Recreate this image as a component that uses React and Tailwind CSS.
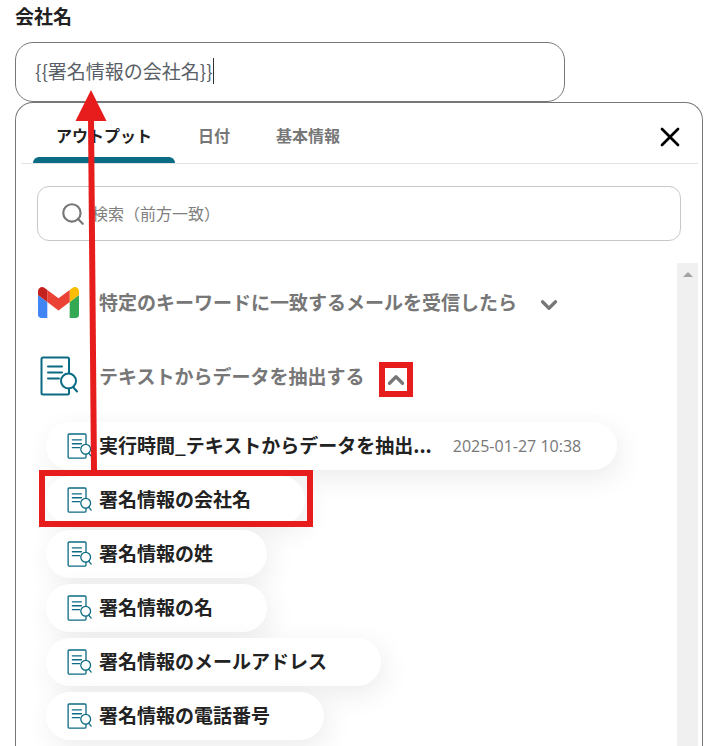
import React, { useState } from 'react';
import { ChevronDown, ChevronUp, Search, X } from 'lucide-react';

const TABS = ['アウトプット', '日付', '基本情報'];

const OUTPUTS = [
    { label: '実行時間_テキストからデータを抽出...', date: '2025-01-27 10:38' },
    { label: '署名情報の会社名', marked: true },
    { label: '署名情報の姓' },
    { label: '署名情報の名' },
    { label: '署名情報のメールアドレス' },
    { label: '署名情報の電話番号' },
];

function GmailIcon() {
    return (
        <svg viewBox="52 42 88 66" className="w-[41px] h-[31px] shrink-0" aria-hidden="true">
            <path fill="#4285f4" d="M58 108h14V74L52 59v43c0 3.32 2.69 6 6 6" />
            <path fill="#34a853" d="M120 108h14c3.32 0 6-2.69 6-6V59l-20 15" />
            <path fill="#fbbc04" d="M120 48v26l20-15v-8c0-7.42-8.47-11.65-14.4-7.2" />
            <path fill="#ea4335" d="M72 74V48l24 18 24-18v26L96 92" />
            <path fill="#c5221f" d="M52 51v8l20 15V48l-5.6-4.2c-5.94-4.45-14.4-.22-14.4 7.2" />
        </svg>
    );
}

function ExtractIcon({ className }) {
    return (
        <svg viewBox="0 0 38 40" className={className} fill="none" stroke="#0b6b83" strokeWidth={2} strokeLinecap="round" aria-hidden="true">
            <path d="M29 17V3a1.500 1.500 0 0 0-1.500-1.500H3A1.500 1.500 0 0 0 1.500 3v34A1.500 1.500 0 0 0 3 38.500h24.500A1.500 1.500 0 0 0 29 37v-4.500" />
            <path d="M8 10.500h14M8 16.500h14M8 22.500h11" />
            <circle cx="28.500" cy="25" r="7.500" />
            <path d="M33 31l4 4.500" />
        </svg>
    );
}

function OutputPill({ item }) {
    return (
        <li className="relative">
            <button
                type="button"
                className={`h-12 pl-[21px] flex items-center gap-[7px] rounded-full bg-white shadow-[4px_8px_28px_rgba(0,0,0,0.08)] whitespace-nowrap ${item.date ? 'pr-9' : 'pr-[54px]'}`}
            >
                <ExtractIcon className="w-[25px] h-[26px] shrink-0" />
                <span className="pb-[2px] text-[19px] leading-7 font-bold text-[#222222]">{item.label}</span>
                {item.date && (
                    <span className="ml-[14px] text-base text-[#777777] font-['Open_Sans','Noto_Sans_CJK_JP',sans-serif]">{item.date}</span>
                )}
            </button>
            {item.marked && <div className="absolute -left-[7px] -top-[6px] w-[274px] h-[57px] border-[6px] border-[#e71c1c]" />}
        </li>
    );
}

export default function App() {
    const [value, setValue] = useState('{{署名情報の会社名}}');
    const [tab, setTab] = useState(TABS[0]);
    const [query, setQuery] = useState('');

    return (
        <div className="relative h-screen overflow-hidden flex flex-col bg-white pl-[15px] pr-[19px] pt-[2px] font-['Noto_Sans_CJK_JP',sans-serif]">
            <label htmlFor="company" className="mb-3 text-[19px] leading-7 font-bold text-[#222222]">会社名</label>
            <div className="relative w-4/5">
                <input
                    id="company"
                    type="text"
                    value={value}
                    onChange={(e) => setValue(e.target.value)}
                    className="w-full h-[60px] px-[19px] pb-1 border border-[#777777] rounded-[18px] text-[19px] text-[#5a5f67] outline-none"
                />
                <span className="absolute left-[198px] top-4 w-px h-[26px] bg-[#333333]" />
            </div>

            <section className="flex-1 min-h-0 flex flex-col border border-b-0 border-[#777777] rounded-t-[18px]">
                <header className="ml-[5px] mr-1 pl-3 pr-3 h-[61px] shrink-0 flex items-stretch justify-between border-b border-[#e2e2e2]">
                    <div role="tablist" className="flex">
                        {TABS.map((name) => (
                            <button
                                key={name}
                                type="button"
                                role="tab"
                                aria-selected={tab === name}
                                onClick={() => setTab(name)}
                                className={`flex flex-col justify-between text-base leading-6 font-bold pt-5 ${tab === name ? 'text-[#222222]' : 'text-[#777777]'}`}
                            >
                                <span className="px-[23px]">{name}</span>
                                {tab === name && <span className="w-full h-[6px] rounded-t-md bg-[#0b6b83]" />}
                            </button>
                        ))}
                    </div>
                    <button type="button" aria-label="閉じる" className="pt-2 text-black">
                        <X size={32} strokeWidth={2} />
                    </button>
                </header>

                <div className="mx-[21px] mt-[22px] h-[55px] shrink-0 pl-[22px] flex items-center gap-[6px] border border-[#c8c8c8] rounded-xl">
                    <Search size={26} strokeWidth={2} className="text-[#777777] shrink-0" />
                    <input
                        type="text"
                        aria-label="検索"
                        placeholder="検索（前方一致）"
                        value={query}
                        onChange={(e) => setQuery(e.target.value)}
                        className="flex-1 h-full pb-px text-base text-[#222222] placeholder:text-[#808080] outline-none"
                    />
                </div>

                <div className="mt-[22px] mr-1 flex-1 min-h-0 flex">
                    <div className="flex-1 min-w-0 flex flex-col pt-[2px] overflow-hidden">
                        <button type="button" className="h-[74px] shrink-0 pl-[22px] flex items-center text-[#777777]">
                            <GmailIcon />
                            <span className="ml-5 text-[19px] leading-7 font-bold">特定のキーワードに一致するメールを受信したら</span>
                            <ChevronDown size={26} strokeWidth={3} className="ml-[19px] mt-[6px]" />
                        </button>
                        <button type="button" className="h-[74px] shrink-0 pl-6 flex items-center text-[#777777]">
                            <ExtractIcon className="w-[38px] h-10 shrink-0" />
                            <span className="ml-[21px] text-[19px] leading-7 font-bold">テキストからデータを抽出する</span>
                            <span className="ml-[15px] mt-[7px] w-[34px] h-[35px] flex items-center justify-center border-[6px] border-[#e71c1c]">
                                <ChevronUp size={26} strokeWidth={3} className="shrink-0" />
                            </span>
                        </button>
                        <ul className="flex-1 min-h-0 overflow-hidden pl-[30px] pt-[9px] flex flex-col items-start gap-[6px]">
                            {OUTPUTS.map((item) => (
                                <OutputPill key={item.label} item={item} />
                            ))}
                        </ul>
                    </div>
                    <div className="w-[21px] shrink-0 bg-[#f0f0f0] flex justify-center pt-[9px]">
                        <svg viewBox="0 0 10 5" className="w-[10px] h-[5px]" aria-hidden="true">
                            <path d="M0 5L5 0l5 5z" fill="#a3a3a3" />
                        </svg>
                    </div>
                </div>
            </section>

            {/* arrow from the chosen output up to the field */}
            <svg viewBox="0 0 32 382" className="absolute left-[75px] top-[90px] w-8 h-[382px] pointer-events-none" aria-hidden="true">
                <path d="M16 0l15.500 31H.5z" fill="#e71c1c" />
                <path d="M16 28l3 354" stroke="#e71c1c" strokeWidth="6" />
            </svg>
        </div>
    );
}
